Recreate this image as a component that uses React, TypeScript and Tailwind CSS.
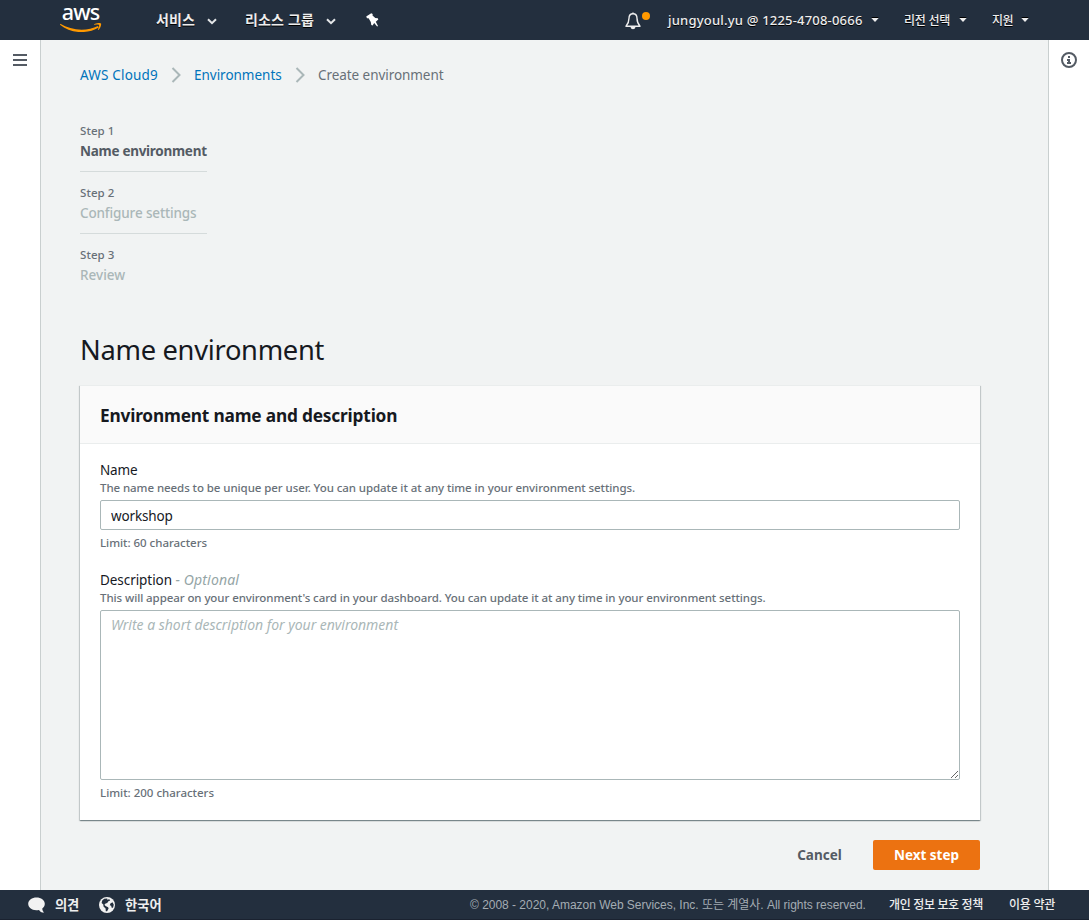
import type { ReactNode } from "react";

function Chevron({ className }: { className: string }) {
  return (
    <svg className={className} viewBox="0 0 10 7" fill="none" stroke="#e4e6e8" strokeWidth="2">
      <path d="M1 1.2 L5 5.2 L9 1.2" />
    </svg>
  );
}

function Caret() {
  return (
    <svg className="h-[4px] w-[8px] drop-shadow-[0_-1px_0_#000]" viewBox="0 0 8 4" fill="#eeeeee">
      <path d="M0.3 0 H7.7 L4 4 Z" />
    </svg>
  );
}

function Separator() {
  return (
    <svg className="h-4 w-[10px]" viewBox="0 0 10 16" fill="none" stroke="#aab7b8" strokeWidth="2">
      <path d="M1.5 1 L8.5 8 L1.5 15" />
    </svg>
  );
}

function Logo() {
  return (
    <div className="flex w-[42px] flex-col items-center self-start [text-shadow:none]">
      <span className="mr-[1px] text-[21.5px] leading-[23px] font-medium tracking-[-0.8px] text-white">aws</span>
      <svg className="h-[9px] w-[42px]" viewBox="0 0 42 9">
        <path d="M0.3 0.8 C11 7.6 27 8.6 38 3 L38.7 4.4 C27 11.5 10 10.5 0 1.8 Z" fill="#ff9900" />
        <path d="M34.2 1.3 C36.2 -0.2 40.3 -0.4 41 0.5 C41.6 1.6 40.4 5.4 38.4 7.1 L37.8 6.8 C38.7 4.8 39.5 2.7 39 2 C38.4 1.4 36.2 1.6 34.4 1.9 Z" fill="#ff9900" />
      </svg>
    </div>
  );
}

function TopBar() {
  return (
    <header className="flex h-10 shrink-0 items-center bg-[#232f3e] pl-[60px] text-[#eeeeee] [text-shadow:0_1px_0_#000]">
      <Logo />
      <div className="ml-[54px] flex w-[89px] items-center text-[14px] leading-5 font-bold">
        <span className="w-[40px] tracking-[0.12px] whitespace-nowrap">서비스</span>
        <Chevron className="mt-[2px] ml-[11px] h-[7px] w-[10px]" />
      </div>
      <div className="flex w-[121px] items-center text-[14px] leading-5 font-bold">
        <span className="w-[70px] tracking-[0.16px] whitespace-nowrap">리소스 그룹</span>
        <Chevron className="mt-[2px] ml-[11px] h-[7px] w-[10px]" />
      </div>
      <svg className="h-[14px] w-[13px]" viewBox="0 0 13 14" fill="#ffffff">
        <path d="M5.2 0.2 L6.7 1.1 L6.5 2.5 L9.3 5 L11.8 5.2 L12.3 6.5 L9.8 8.8 L12 12.9 L11.1 13.4 L8.2 10.1 L6.6 12.4 L5.3 12 L4.8 8.9 L2.6 5.3 L1 5.2 L0.2 3.6 Z" />
      </svg>
      <div className="relative ml-[246px] h-[18px] w-[43px]">
        <svg className="mt-[1px] h-[18px] w-[16px]" viewBox="0 0 16 18" fill="none">
          <path d="M8 1.7 C5.2 1.7 4 4 4 6.3 C4 9.8 3.2 11.7 1 14.2 H15 C12.8 11.7 12 9.8 12 6.3 C12 4 10.8 1.7 8 1.7 Z" stroke="#eeeeee" strokeWidth="1.4" strokeLinejoin="round" />
          <path d="M7.3 0.4 H8.7 V2 H7.3 Z M5.6 15 H10.4 C10.2 18 5.8 18 5.6 15 Z" fill="#eeeeee" />
        </svg>
        <span className="absolute top-[1px] left-[17px] size-2 rounded-full bg-[#ff9900]" />
      </div>
      <div className="flex w-[236px] items-center gap-[8px] text-[13px] leading-5 font-medium">
        <span className="w-[195px] tracking-[0.2px] whitespace-nowrap">jungyoul.yu @ 1225-4708-0666</span>
        <Caret />
      </div>
      <div className="flex w-[88px] items-center gap-[8px] text-[12px] leading-5 font-medium">
        <span className="w-[47px] pt-[2px] tracking-[-0.26px] whitespace-nowrap">리전 선택</span>
        <Caret />
      </div>
      <div className="flex items-center gap-[7px] text-[12px] leading-5 font-medium">
        <span className="w-[22px] pt-[2px] tracking-[-0.54px] whitespace-nowrap">지원</span>
        <Caret />
      </div>
    </header>
  );
}

function Step({ n, last, children }: { n: number; last?: boolean; children: ReactNode }) {
  return (
    <li className={last ? "pt-[11px]" : n === 1 ? "border-b border-[#d5dbdb] pb-[10px]" : "border-b border-[#d5dbdb] pt-[11px] pb-[10px]"}>
      <div className="text-[11.5px] leading-5 font-medium tracking-[0.08px] text-[#687078]">Step {n}</div>
      <div className="text-[13.5px] leading-5 whitespace-nowrap">{children}</div>
    </li>
  );
}

function FormCard() {
  return (
    <section className="mt-[17px] h-[435px] bg-white shadow-[0_1px_1px_0_rgba(0,28,36,0.3),1px_1px_1px_0_rgba(0,28,36,0.15),-1px_1px_1px_0_rgba(0,28,36,0.15)]">
      <div className="h-[59px] border-t border-b border-[#eaeded] bg-[#fafafa] px-5 pt-[19px]">
        <h2 className="text-[17.3px] leading-[22px] font-bold tracking-[-0.19px] text-[#16191f]">Environment name and description</h2>
      </div>
      <div className="px-5 pt-[17px]">
        <label className="block text-[13.5px] leading-[18px] font-[450] tracking-[-0.16px] text-[#16191f]">Name</label>
        <p className="text-[11.5px] leading-[18px] font-medium tracking-[-0.073px] whitespace-nowrap text-[#687078]">
          The name needs to be unique per user. You can update it at any time in your environment settings.
        </p>
        <input
          className="mt-[3px] block h-[30px] w-full rounded-[2px] border border-[#aab7b8] bg-white px-[10px] pt-[2px] text-[13.5px] leading-5 font-[450] tracking-[-0.15px] text-[#16191f] outline-none"
          defaultValue="workshop"
        />
        <p className="mt-[4px] text-[11.5px] leading-[18px] font-medium tracking-[-0.03px] text-[#687078]">Limit: 60 characters</p>
        <label className="mt-[19px] block text-[13.5px] leading-[18px] font-[450] tracking-[-0.06px] text-[#16191f]">
          Description <span className="text-[14px] tracking-[0.16px] text-[#95a5a6] italic">- Optional</span>
        </label>
        <p className="text-[11.5px] leading-[18px] font-medium tracking-[-0.083px] whitespace-nowrap text-[#687078]">
          This will appear on your environment's card in your dashboard. You can update it at any time in your environment settings.
        </p>
        <textarea
          className="mt-[3px] block h-[170px] w-full rounded-[2px] border border-[#aab7b8] bg-white px-[10px] py-[4px] text-[14px] leading-5 font-[450] tracking-[-0.027px] outline-none placeholder:text-[#aab7b8] placeholder:italic"
          placeholder="Write a short description for your environment"
        />
        <p className="mt-[4px] text-[11.5px] leading-[18px] font-medium tracking-[-0.01px] text-[#687078]">Limit: 200 characters</p>
      </div>
    </section>
  );
}

function Footer() {
  return (
    <footer className="flex h-[30px] shrink-0 items-center border-b border-[#1a2230] bg-[#232f3e] pl-[28px] text-[#eeeeee]">
      <svg className="h-4 w-[17px]" viewBox="0 0 17 16" fill="#f2f2f2">
        <path d="M8.5 0.4 C13 0.4 16.8 3 16.8 6.8 C16.8 8.8 15.8 10.5 14.3 11.6 C14.3 13.2 15 14.8 16.2 15.6 C13.7 15.7 11.9 14.6 11 13 C4.5 14.2 0.2 11 0.2 6.8 C0.2 3 4 0.4 8.5 0.4 Z" />
      </svg>
      <span className="ml-[10px] w-[25px] text-[13.3px] leading-5 font-bold tracking-[-0.2px] whitespace-nowrap">의견</span>
      <svg className="ml-[19px] size-4" viewBox="0 0 16 16">
        <circle cx="8" cy="8" r="8" fill="#f2f2f2" />
        <path d="M3.2 3.6 L5.2 1.7 L8.3 1.5 L8.2 2.7 L10.3 2.2 L11.2 3.6 L9.4 4.2 L8.2 5.9 L6.6 6.5 L5.4 7.7 L6.6 9 L9.1 10.2 L9.6 11.5 L8.1 14.2 L6.8 14.3 L6.6 11.5 L4.5 9.4 L4.3 7.5 L2.6 6.1 Z M11.4 6.4 L13.5 5.2 L14.8 7.8 L14 10.7 L12.7 10.7 L12.1 8.8 L10.8 8.2 Z" fill="#232f3e" />
      </svg>
      <span className="ml-[10px] w-[38px] text-[13.3px] leading-5 font-bold tracking-[0.05px] whitespace-nowrap">한국어</span>
      <span className="ml-[307px] w-[397px] font-['Liberation_Sans','Noto_Sans_CJK_KR',sans-serif] text-[12px] leading-5 tracking-[-0.02px] whitespace-nowrap text-[#a4acb3]">
        © 2008 - 2020, Amazon Web Services, Inc. 또는 계열사. All rights reserved.
      </span>
      <span className="ml-[22px] w-[98px] text-[12px] leading-5 font-medium tracking-[-0.335px] whitespace-nowrap">개인 정보 보호 정책</span>
      <span className="ml-[22px] text-[12px] leading-5 font-medium tracking-[-0.256px] whitespace-nowrap">이용 약관</span>
    </footer>
  );
}

export default function App() {
  return (
    <div className="flex h-[920px] w-[1089px] flex-col overflow-hidden font-['Noto_Sans','Noto_Sans_CJK_KR',sans-serif]">
      <TopBar />
      <div className="flex h-[850px] bg-[#f1f3f3]">
        <aside className="w-[41px] shrink-0 border-r border-[#c9cfcf] bg-white pt-[14px] pl-[13px]">
          <div className="flex w-[14px] flex-col gap-[3px]">
            <div className="h-[2px] bg-[#545b64]" />
            <div className="h-[2px] bg-[#545b64]" />
            <div className="h-[2px] bg-[#545b64]" />
          </div>
        </aside>
        <main className="w-[1007px] shrink-0 pt-[25px] pr-[68px] pl-[39px]">
          <nav className="flex h-5 items-center text-[13.5px] leading-5 font-[450] whitespace-nowrap">
            <a className="w-[91px] tracking-[0.19px] text-[#0073bb]">AWS Cloud9</a>
            <Separator />
            <a className="ml-[13px] w-[101px] tracking-[-0.02px] text-[#0073bb]">Environments</a>
            <Separator />
            <span className="ml-[13px] tracking-[-0.06px] text-[#687078]">Create environment</span>
          </nav>
          <ol className="mt-[36px] w-[127px]">
            <Step n={1}>
              <span className="font-bold tracking-[-0.28px] text-[#545b64]">Name environment</span>
            </Step>
            <Step n={2}>
              <span className="font-medium tracking-[-0.14px] text-[#aab7b8]">Configure settings</span>
            </Step>
            <Step n={3} last>
              <span className="font-medium text-[#aab7b8]">Review</span>
            </Step>
          </ol>
          <h1 className="mt-[47px] text-[27.3px] leading-[36px] font-[450] tracking-[-0.31px] text-[#16191f]">Name environment</h1>
          <FormCard />
          <div className="mt-5 flex h-[30px] justify-end text-[13.5px] font-bold">
            <button className="w-[107px] text-center leading-[30px] text-[#545b64]">Cancel</button>
            <button className="w-[107px] rounded-[2px] bg-[#ec7211] text-center leading-[30px] text-white">Next step</button>
          </div>
        </main>
        <aside className="w-[41px] shrink-0 border-l border-[#c9cfcf] bg-white pt-[12px] pl-[12px]">
          <svg className="size-4" viewBox="0 0 16 16" fill="none">
            <circle cx="8" cy="8" r="7" stroke="#545b64" strokeWidth="2" />
            <path d="M7 4 H9 V6 H7 Z M6 7 H9 V10 H10 V12 H6 V10 H7 V9 H6 Z" fill="#545b64" />
          </svg>
        </aside>
      </div>
      <Footer />
    </div>
  );
}
